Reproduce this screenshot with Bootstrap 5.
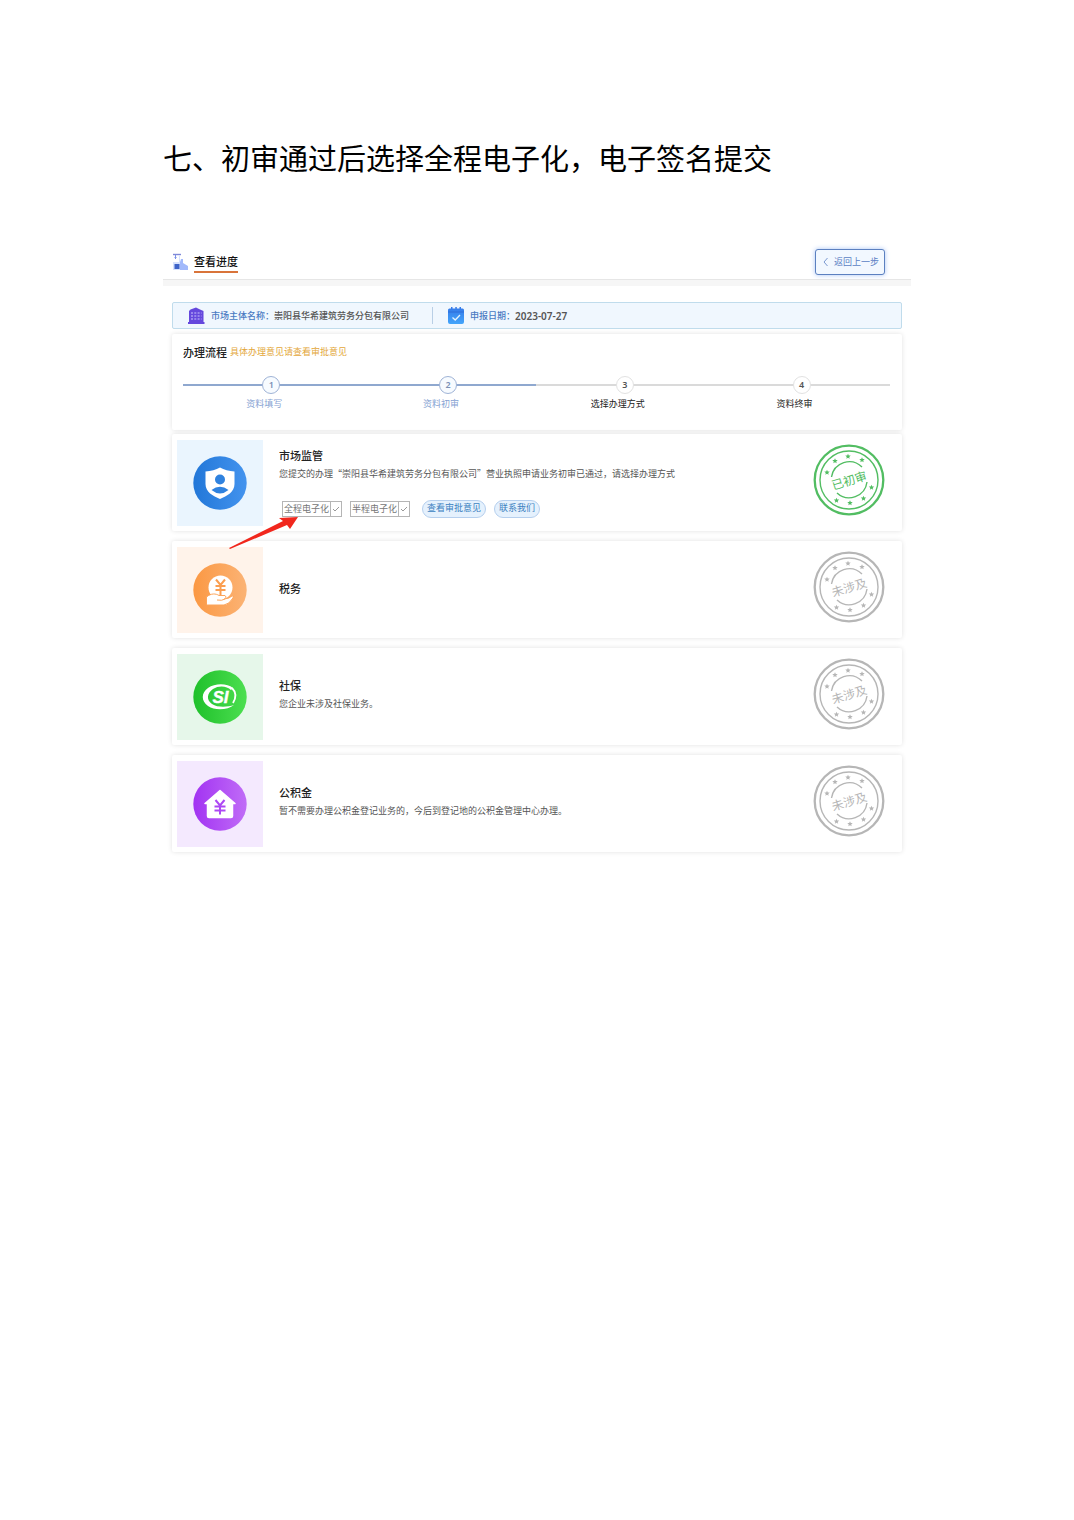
<!DOCTYPE html>
<html lang="zh-CN">
<head>
<meta charset="utf-8">
<meta name="viewport" content="width=device-width, initial-scale=1">
<title>查看进度</title>
<link rel="stylesheet" href="https://cdn.jsdelivr.net/npm/bootstrap@5.3.0/dist/css/bootstrap.min.css">
<style>
  body { font-family: "Noto Sans CJK SC", sans-serif; font-size: 9px; line-height: 20px; color: #555; background: #fff; }
  .sheet { padding: 136px 163px 60px; }
  .doc-title { font-size: 29px; line-height: 42px; font-weight: 400; color: #000; margin: 0 0 67px; white-space: nowrap; }
  .app-head { height: 35px; padding: 0 26px 0 9px; border-bottom: 1px solid #e6e6e6; }
  .head-band { height: 6px; background: #f6f6f6; }
  .page-name { font-size: 11px; line-height: 19px; font-weight: 500; color: #111; border-bottom: 2px solid #d9743a; margin: 0; }
  .btn-back { font-size: 9px; line-height: 16px; padding: 4px 5px 4px 6px; color: #5a7fc4; background: #f2f8ff; border: 1px solid #5b80c0; border-radius: 3px; box-shadow: 0 0 5px #a9c4f5; }
  .btn-back:hover { color: #315fae; border-color: #315fae; background: #e7f1ff; }
  .main-area { padding: 16px 9px 0; }
  .info-bar { height: 27px; background: #f0f7fe; border: 1px solid #c0dcec; border-radius: 2px; }
  .info-cell { padding: 0 15px; gap: 6px; line-height: 16px; }
  .info-cell:first-child { width: 260px; margin: 4px 0; border-right: 1px solid #b9cfe6; }
  .info-cell dt { font-weight: 500; color: #4a7ac2; }
  .info-cell dd { font-weight: 500; color: #555; margin: 0; }
  .info-cell .date { font: 600 10px/16px "Noto Sans", sans-serif; }
  .panel { background: #fff; border-radius: 2px; box-shadow: 0 0 5px rgba(0, 0, 0, .12); }
  .flow { margin-top: 5px; padding: 8px 12px 16px 11px; }
  .flow h2 { font-size: 11px; line-height: 20px; font-weight: 500; color: #222; margin: 0; }
  .flow-note { color: #e3a73a; margin-left: 3px; }
  .steps { margin: 14px 0 0; background: linear-gradient(90deg, #8fa8cf 50%, #dadada 50%) 0 8px / 100% 2px no-repeat; }
  .step-dot { width: 18px; height: 18px; border: 1px solid #e2e2e2; border-radius: 50%; background: #fff; font: 600 9px/16px "Noto Sans", sans-serif; color: #555; }
  .step-name { padding-right: 14px; color: #222; }
  .done .step-dot { border-color: #9fb3d6; color: #7c90b5; background: #f7fbff; }
  .done .step-name { color: #86a2d2; }
  .dept-list { margin-top: 4px; gap: 10px; }
  .dept { min-height: 97px; padding: 5px 17px 5px 5px; gap: 16px; }
  .tile { width: 86px; height: 86px; }
  .tile-blue { background: #eaf5fe; } .tile-orange { background: #fff3ea; }
  .tile-green { background: #e6f7ea; } .tile-purple { background: #f4e9fe; }
  .dept h3 { font-size: 11px; line-height: 17px; font-weight: 500; color: #222; margin: 0; }
  .dept p { margin: 0; }
  .dept-text { padding-bottom: 3px; }
  .with-actions { padding-bottom: 1px; }
  .actions { margin-top: 16px; padding-left: 3px; height: 18px; }
  .btn-mode { height: 16px; padding: 0; font-size: 9px; line-height: 14px; color: #777; background: #fff; border: 1px solid #b5b5b5; border-radius: 0; }
  .btn-mode .mode-name { padding: 0 1px; }
  .btn-mode .tick { width: 11px; border-left: 1px solid #b5b5b5; }
  .btn-pill { height: 18px; padding: 0 4px; font-size: 9px; line-height: 14px; color: #3a7fc0; background: #e5f1fd; border: 1px solid #b5cfee; border-radius: 9px; }
  .btn-pill span { display: block; height: 16px; }
  .stamp { margin-bottom: 5px; }
  .stamp text { font-size: 12px; }
  .pointer { position: absolute; left: 57px; top: 82px; pointer-events: none; z-index: 2; }
</style>
</head>
<body>
<svg width="0" height="0" class="position-absolute" aria-hidden="true">
  <defs>
    <linearGradient id="gBlue"><stop stop-color="#2277d8"/><stop offset="1" stop-color="#4393ee"/></linearGradient>
    <linearGradient id="gOrange"><stop stop-color="#fb9843"/><stop offset="1" stop-color="#fbb375"/></linearGradient>
    <linearGradient id="gGreen"><stop stop-color="#1fc02b"/><stop offset="1" stop-color="#4cdf50"/></linearGradient>
    <linearGradient id="gPurple"><stop stop-color="#a233f2"/><stop offset="1" stop-color="#c06cf7"/></linearGradient>
    <linearGradient id="gCal" x2="0" y2="1"><stop stop-color="#3478e8"/><stop offset="1" stop-color="#43a5fb"/></linearGradient>
    <path id="star" d="M0-2.8 .8-.9 2.7-.9 1.2.4 1.7 2.3 0 1.2-1.7 2.3-1.2.4-2.7-.9-.8-.9Z"/>
    <g id="seal">
      <g fill="none" stroke="currentColor">
        <circle r="34.3" stroke-width="2.3"/>
        <circle r="29" stroke-width="1.4"/>
        <path d="M-17.5-3A18 18 0 0 1 13-13M18 2A18 18 0 0 1-12 13" stroke-width="1.4"/>
      </g>
      <g fill="currentColor">
        <use href="#star" x="-14" y="-19"/><use href="#star" x="-1" y="-23.5"/><use href="#star" x="13" y="-20"/>
        <use href="#star" x="-22" y="-7.5"/><use href="#star" x="22.5" y="7.5"/><use href="#star" x="14.5" y="18.5"/>
        <use href="#star" x="1" y="23"/><use href="#star" x="-12.5" y="20.5"/>
      </g>
    </g>
  </defs>
</svg>

<main class="sheet">
  <h1 class="doc-title">七、初审通过后选择全程电子化，电子签名提交</h1>

  <header class="app-head d-flex align-items-center justify-content-between">
    <div class="d-flex align-items-center gap-1">
      <svg width="18" height="18" viewBox="0 0 18 18" aria-hidden="true">
        <path d="M1 1.5H9" stroke="#7e88d8" stroke-width="1.4"/><path d="M3.500 2V6M2.500 4.500H4.500" stroke="#7a91e8" fill="none"/>
        <path d="M8 2V17H1V9H7V3Z" fill="#d7e2fd"/><path d="M9 6H11V10L16 13V17H8V9Z" fill="#a2b9fb"/>
        <rect x="2.500" y="11" width="5" height="5" fill="#3e63c8"/>
      </svg>
      <h2 class="page-name">查看进度</h2>
    </div>
    <button type="button" class="btn btn-back d-flex align-items-center gap-1">
      <svg width="8" height="10" viewBox="0 0 8 10" fill="none" stroke="currentColor" stroke-width=".8" aria-hidden="true"><path d="M5.500 1 2 5 5.500 9"/></svg>
      <span>返回上一步</span>
    </button>
  </header>
  <div class="head-band"></div>

  <div class="main-area">
    <dl class="info-bar d-flex align-items-stretch m-0">
      <div class="info-cell d-flex align-items-center">
        <svg width="17" height="17" viewBox="0 0 17 17" aria-hidden="true">
          <path d="M0 15H1V4L2.500 2.500 8 .5 12 2.500 15.500 4V15H16.500V17H0Z" fill="#6548dd"/>
          <path d="M3 6H13.500M3 9H13.500M3 12H13.500" stroke="#a99bf2" stroke-width="1.500" stroke-dasharray="2 1.300"/>
        </svg>
        <div class="d-flex text-nowrap"><dt>市场主体名称：</dt><dd>崇阳县华希建筑劳务分包有限公司</dd></div>
      </div>
      <div class="info-cell d-flex align-items-center">
        <svg width="16" height="17" viewBox="0 0 16 17" aria-hidden="true">
          <path d="M0 3Q0 1.500 1.500 1.500H3V0H4.500V1.500H7.300V0H8.800V1.500H11.500V0H13V1.500H14.500Q16 1.500 16 3V15Q16 17 14 17H2Q0 17 0 15Z" fill="url(#gCal)"/>
          <path d="M0 5H16" stroke="#2a63cf" stroke-width=".7"/><path d="M4.500 10.500 7.200 13 12 8" fill="none" stroke="#e4f3ff" stroke-width="1.300"/>
        </svg>
        <div class="d-flex text-nowrap"><dt>申报日期：</dt><dd class="date">2023-07-27</dd></div>
      </div>
    </dl>

    <section class="panel flow">
      <div class="d-flex align-items-center text-nowrap">
        <h2>办理流程</h2><span class="flow-note">具体办理意见请查看审批意见</span>
      </div>
      <ol class="steps row row-cols-4 g-0 list-unstyled text-center">
        <li class="done"><div class="step-dot mx-auto">1</div><div class="step-name">资料填写</div></li>
        <li class="done"><div class="step-dot mx-auto">2</div><div class="step-name">资料初审</div></li>
        <li><div class="step-dot mx-auto">3</div><div class="step-name">选择办理方式</div></li>
        <li><div class="step-dot mx-auto">4</div><div class="step-name">资料终审</div></li>
      </ol>
    </section>

    <div class="dept-list d-flex flex-column">
      <article class="panel dept d-flex align-items-center position-relative">
        <div class="tile tile-blue d-flex align-items-center justify-content-center flex-shrink-0">
          <svg width="54" height="54" viewBox="0 0 54 54" aria-hidden="true">
            <circle cx="27" cy="27" r="26.700" fill="url(#gBlue)"/>
            <path d="M27 11.500C31 14 36 15 41.500 15.500V28C41.500 36 34 40 27 43 20 40 12.500 36 12.500 28V15.500C18 15 23 14 27 11.500Z" fill="#fff"/>
            <circle cx="27" cy="23.500" r="5" fill="#2f82df"/><path d="M18.500 34Q27 27.500 35.500 34 27 41 18.500 34Z" fill="#2f82df"/>
          </svg>
        </div>
        <div class="dept-text with-actions flex-grow-1 text-nowrap">
          <h3>市场监管</h3>
          <p>您提交的办理“崇阳县华希建筑劳务分包有限公司”营业执照申请业务初审已通过，请选择办理方式</p>
          <div class="actions d-flex align-items-center">
            <button type="button" class="btn btn-mode d-flex align-items-stretch me-2"><span class="mode-name">全程电子化</span><span class="tick d-flex align-items-center justify-content-center"><svg width="8" height="8" viewBox="0 0 8 8" fill="none" stroke="#999" aria-hidden="true"><path d="M1 4 3 6 7 2"/></svg></span></button>
            <button type="button" class="btn btn-mode d-flex align-items-stretch me-2"><span class="mode-name">半程电子化</span><span class="tick d-flex align-items-center justify-content-center"><svg width="8" height="8" viewBox="0 0 8 8" fill="none" stroke="#999" aria-hidden="true"><path d="M1 4 3 6 7 2"/></svg></span></button>
            <button type="button" class="btn btn-pill ms-1 me-2"><span>查看审批意见</span></button>
            <button type="button" class="btn btn-pill"><span>联系我们</span></button>
          </div>
        </div>
        <svg class="stamp flex-shrink-0" width="72" height="72" viewBox="-36 -36 72 72" color="#52bd62" role="img" aria-label="已初审"><use href="#seal"/><text text-anchor="middle" y="5" transform="rotate(-17)" fill="currentColor">已初审</text></svg>
        <svg class="pointer" width="72" height="34" viewBox="0 0 72 34" aria-hidden="true"><path d="M0 32 54 5 50 2 69 1 61 13 58 9 1 33Z" fill="#f1271d"/></svg>
      </article>

      <article class="panel dept d-flex align-items-center">
        <div class="tile tile-orange d-flex align-items-center justify-content-center flex-shrink-0">
          <svg width="54" height="54" viewBox="0 0 54 54" aria-hidden="true">
            <circle cx="27" cy="27" r="26.700" fill="url(#gOrange)"/>
            <circle cx="27.500" cy="24.500" r="12" fill="#fff"/>
            <path d="M23 16.500 27.500 22 32 16.500M27.500 22V32M22.500 23H32.500M22.500 27H32.500" fill="none" stroke="#fb9e50" stroke-width="2"/>
            <path d="M13.500 34C18 30 23 30.500 26 32.500H32Q34.500 34 31.500 36 36.500 35.500 39 33 41.500 32 40 35 36 41.500 31 42H13.500Z" fill="#fff" stroke="#fca45a" stroke-width="1"/>
            <path d="M24 37Q29 38 32 36" fill="none" stroke="#fca45a"/>
          </svg>
        </div>
        <div class="dept-text flex-grow-1"><h3>税务</h3></div>
        <svg class="stamp flex-shrink-0" width="72" height="72" viewBox="-36 -36 72 72" color="#b6b6b6" role="img" aria-label="未涉及"><use href="#seal"/><text text-anchor="middle" y="5" transform="rotate(-17)" fill="currentColor">未涉及</text></svg>
      </article>

      <article class="panel dept d-flex align-items-center">
        <div class="tile tile-green d-flex align-items-center justify-content-center flex-shrink-0">
          <svg width="54" height="54" viewBox="0 0 54 54" aria-hidden="true">
            <circle cx="27" cy="27" r="26.700" fill="url(#gGreen)"/>
            <path d="M40 18C34 13 22 13 15 18 8 23 8 31 15 36 22 41 35 40 41 35 35 37 25 38 19 34 13 30 14 23 20 19 26 15 34 16 38 20Z" fill="#fff"/>
            <path d="M39 18C44 23 43 28 40 33" fill="none" stroke="#fff" stroke-width="1.800"/>
            <text x="27.500" y="33" text-anchor="middle" font-family="Liberation Sans" font-style="italic" font-weight="700" font-size="17" fill="#fff" stroke="#fff" stroke-width=".4">SI</text>
          </svg>
        </div>
        <div class="dept-text flex-grow-1"><h3>社保</h3><p>您企业未涉及社保业务。</p></div>
        <svg class="stamp flex-shrink-0" width="72" height="72" viewBox="-36 -36 72 72" color="#b6b6b6" role="img" aria-label="未涉及"><use href="#seal"/><text text-anchor="middle" y="5" transform="rotate(-17)" fill="currentColor">未涉及</text></svg>
      </article>

      <article class="panel dept d-flex align-items-center">
        <div class="tile tile-purple d-flex align-items-center justify-content-center flex-shrink-0">
          <svg width="54" height="54" viewBox="0 0 54 54" aria-hidden="true">
            <circle cx="27" cy="27" r="26.700" fill="url(#gPurple)"/>
            <path d="M27 13.500 42 26.500H39.500V39Q39.500 40.500 38 40.500H16Q14.500 40.500 14.500 39V26.500H12Z" fill="#fff" stroke="#fff" stroke-width="1.500" stroke-linejoin="round"/>
            <path d="M22.500 23 27 28.500 31.500 23M27 28.500V37.500M21.500 29.500H32.500M21.500 33.500H32.500" fill="none" stroke="#ad48f4" stroke-width="2"/>
          </svg>
        </div>
        <div class="dept-text flex-grow-1"><h3>公积金</h3><p>暂不需要办理公积金登记业务的，今后到登记地的公积金管理中心办理。</p></div>
        <svg class="stamp flex-shrink-0" width="72" height="72" viewBox="-36 -36 72 72" color="#b6b6b6" role="img" aria-label="未涉及"><use href="#seal"/><text text-anchor="middle" y="5" transform="rotate(-17)" fill="currentColor">未涉及</text></svg>
      </article>
    </div>
  </div>
</main>
<script src="https://cdn.jsdelivr.net/npm/bootstrap@5.3.0/dist/js/bootstrap.bundle.min.js"></script>
</body>
</html>
